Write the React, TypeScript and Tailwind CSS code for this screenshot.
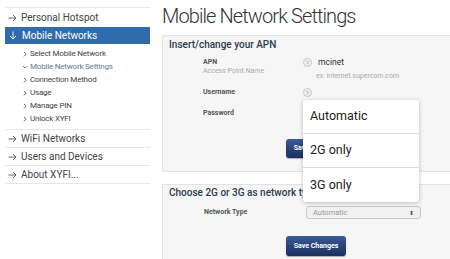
const font = { fontFamily: "Roboto, 'Liberation Sans', sans-serif" };

function ArrowRight() {
  return (
    <svg width="9" height="8" viewBox="0 0 9 8" className="shrink-0">
      <path d="M0.5 4H8M5 1l3 3-3 3" fill="none" stroke="#555" strokeWidth="0.9" />
    </svg>
  );
}

function ArrowDown() {
  return (
    <svg width="8" height="9" viewBox="0 0 8 9" className="shrink-0">
      <path d="M4 0.5V8M1 5l3 3 3-3" fill="none" stroke="#fff" strokeWidth="0.9" />
    </svg>
  );
}

function Chevron({ open }: { open?: boolean }) {
  return (
    <svg width="6" height="6" viewBox="0 0 6 6" className="shrink-0">
      {open ? (
        <path d="M1 2l2 2 2-2" fill="none" stroke="#6a8299" strokeWidth="0.9" />
      ) : (
        <path d="M2 1l2 2.2-2 2.2" fill="none" stroke="#555" strokeWidth="0.9" />
      )}
    </svg>
  );
}

function Help() {
  return (
    <span className="flex h-[9px] w-[9px] shrink-0 items-center justify-center rounded-full border border-[#c9c9c9] bg-[#efefef] text-[6px] leading-none text-[#999]">
      ?
    </span>
  );
}

function SaveButton({ h }: { h: string }) {
  return (
    <button
      className={`${h} w-[60px] rounded-[3px] bg-gradient-to-b from-[#3a5c96] to-[#1b2f5e] text-[7px] font-bold leading-none text-white shadow-[0_1px_1px_rgba(0,0,0,0.3)]`}
    >
      Save Changes
    </button>
  );
}

const subItems = [
  "Select Mobile Network",
  "Mobile Network Settings",
  "Connection Method",
  "Usage",
  "Manage PIN",
  "Unlock XYFI",
];

export default function App() {
  return (
    <div className="flex h-[259px] w-[450px] overflow-hidden bg-white" style={font}>
      <aside className="ml-[5px] mt-[7px] w-[145px] shrink-0 self-start border-t border-[#e6e6e6]">
        <div className="flex h-[19px] items-center gap-[4px] pl-[3px] text-[10px] text-[#444]">
          <ArrowRight />
          <span>Personal Hotspot</span>
        </div>
        <div className="flex h-[17px] items-center gap-[5px] bg-[#2e6cad] pl-[4px] text-[10px] text-white">
          <ArrowDown />
          <span>Mobile Networks</span>
        </div>
        <ul className="border-b border-[#e6e6e6] pb-[4px] pt-[3px]">
          {subItems.map((s) => (
            <li
              key={s}
              className={`flex h-[13px] items-center gap-[2px] pl-[17px] text-[8px] tracking-[-0.2px] ${
                s === "Mobile Network Settings" ? "text-[#5f7d99]" : "text-[#444]"
              }`}
            >
              <Chevron open={s === "Mobile Network Settings"} />
              <span>{s}</span>
            </li>
          ))}
        </ul>
        {["WiFi Networks", "Users and Devices", "About XYFI..."].map((s) => (
          <div
            key={s}
            className="flex h-[18px] items-center gap-[4px] border-b border-[#e6e6e6] pl-[3px] text-[10px] text-[#444]"
          >
            <ArrowRight />
            <span>{s}</span>
          </div>
        ))}
      </aside>

      <main className="relative ml-[12px] w-[320px] shrink-0">
        <h1 className="pt-[6px] text-[20px] font-light leading-[21px] tracking-[-0.9px] text-[#333]">
          Mobile Network Settings
        </h1>

        <section className="mt-[8px] border border-[#e2e2e2] bg-[#f6f6f6] pb-[13px]">
          <div className="flex h-[17px] items-center pl-[6px] text-[10px] font-medium text-[#2c3b4e]">
            Insert/change your APN
          </div>
          <div className="mt-[5px] flex">
            <div className="w-[140px] shrink-0 pl-[40px]">
              <div className="text-[7px] font-bold leading-[9px] text-[#555]">APN</div>
              <div className="text-[7px] leading-[9px] text-[#aaa]">Access Point Name</div>
            </div>
            <div>
              <div className="flex items-center gap-[6px]">
                <Help />
                <span className="text-[8.5px] leading-[9px] text-[#333]">mcinet</span>
              </div>
              <div className="mt-[5px] pl-[13px] text-[7px] leading-[9px] text-[#aaa]">
                ex: internet.supercom.com
              </div>
            </div>
          </div>
          <div className="mt-[7px] flex items-center">
            <div className="w-[140px] shrink-0 pl-[40px] text-[7px] font-bold leading-[9px] text-[#555]">
              Username
            </div>
            <Help />
          </div>
          <div className="mt-[12px] flex items-center">
            <div className="w-[140px] shrink-0 pl-[40px] text-[7px] font-bold leading-[9px] text-[#555]">
              Password
            </div>
            <Help />
          </div>
          <div className="mt-[21px] flex pl-[123px]">
            <SaveButton h="h-[19px]" />
          </div>
        </section>

        <section className="mt-[12px] border border-[#e2e2e2] bg-[#f6f6f6] pb-[10px]">
          <div className="flex h-[15px] items-center pl-[6px] text-[10px] font-medium text-[#2c3b4e]">
            Choose 2G or 3G as network type
          </div>
          <div className="mt-[6px] flex items-center">
            <div className="w-[143px] shrink-0 pl-[41px] text-[7px] font-bold leading-[9px] text-[#555]">
              Network Type
            </div>
            <div className="flex h-[13px] w-[115px] items-center justify-between rounded-[3px] border border-[#c8c8c8] bg-[#f1f1f1] px-[6px] text-[7.5px] text-[#999]">
              <span>Automatic</span>
              <span className="text-[6px] leading-none text-[#555]">⬍</span>
            </div>
          </div>
          <div className="mt-[17px] flex pl-[123px]">
            <SaveButton h="h-[20px]" />
          </div>
        </section>

        <ul className="absolute left-[141px] top-[100px] w-[116px] rounded-[3px] bg-white shadow-[0_1px_4px_rgba(0,0,0,0.25)]">
          {["Automatic", "2G only", "3G only"].map((s, i) => (
            <li
              key={s}
              className={`flex h-[34px] items-center pl-[7px] text-[12.5px] text-[#222] ${
                i < 2 ? "border-b border-[#dcdcdc]" : ""
              }`}
            >
              {s}
            </li>
          ))}
        </ul>
      </main>
    </div>
  );
}
